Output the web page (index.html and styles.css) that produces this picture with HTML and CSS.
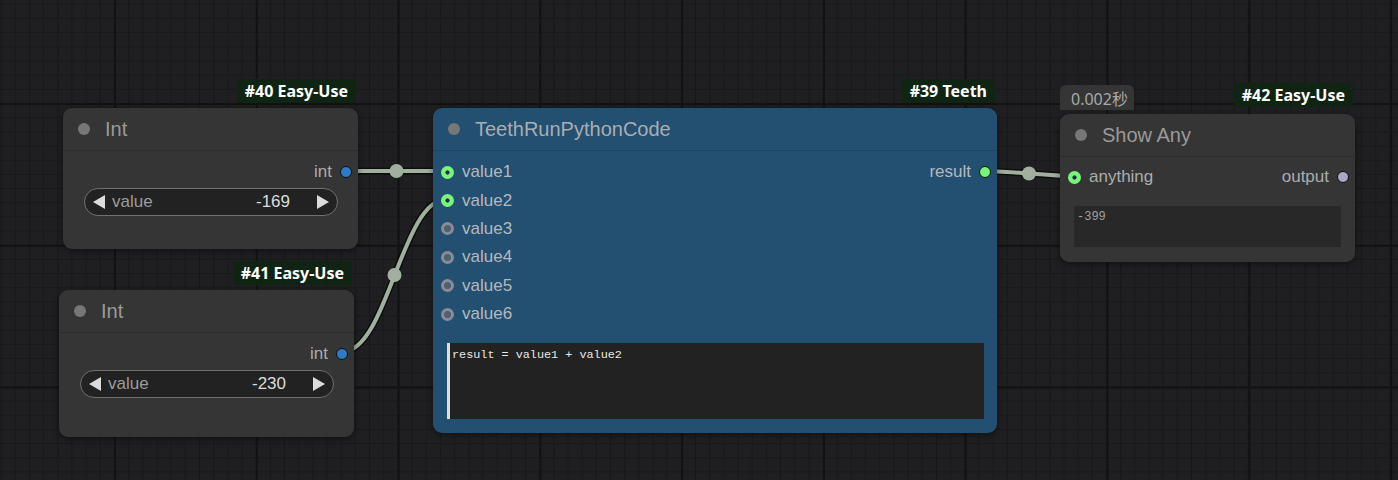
FILE: index.html
```html
<!DOCTYPE html>
<html>
<head>
<meta charset="utf-8">
<link rel="stylesheet" href="styles.css">
</head>
<body>
<div class="canvas">
  <svg class="links" width="1398" height="480" viewBox="0 0 1398 480">
    <g fill="none" stroke-linecap="round">
      <path class="link-shadow" d="M346 171 C371 171 422 171 447 171"/>
      <path class="link-shadow" d="M342 352 C388 352 401 199 447 199"/>
      <path class="link-shadow" d="M985 171 C1007 171 1051 176 1073 176"/>
      <path class="link" d="M346 171 C371 171 422 171 447 171"/>
      <path class="link" d="M342 352 C388 352 401 199 447 199"/>
      <path class="link" d="M985 171 C1007 171 1051 176 1073 176"/>
    </g>
    <g class="link-mid">
      <circle cx="396.5" cy="171" r="7"/>
      <circle cx="394.5" cy="275" r="7"/>
      <circle cx="1029" cy="173.5" r="7"/>
    </g>
  </svg>

  <div class="node node-gray n40">
    <div class="badge">#40 Easy-Use</div>
    <div class="title"><span class="status"></span><span class="title-text">Int</span></div>
    <div class="body">
      <div class="slot-row right"><span class="label">int</span><i class="sock sock-out sock-int"></i></div>
      <div class="widget">
        <svg class="arrow" width="12" height="14" viewBox="0 0 12 14"><polygon points="12,0 12,14 0,7"/></svg>
        <span class="w-label">value</span>
        <span class="w-value">-169</span>
        <svg class="arrow" width="12" height="14" viewBox="0 0 12 14"><polygon points="0,0 0,14 12,7"/></svg>
      </div>
    </div>
  </div>

  <div class="node node-gray n41">
    <div class="badge">#41 Easy-Use</div>
    <div class="title"><span class="status"></span><span class="title-text">Int</span></div>
    <div class="body">
      <div class="slot-row right"><span class="label">int</span><i class="sock sock-out sock-int"></i></div>
      <div class="widget">
        <svg class="arrow" width="12" height="14" viewBox="0 0 12 14"><polygon points="12,0 12,14 0,7"/></svg>
        <span class="w-label">value</span>
        <span class="w-value">-230</span>
        <svg class="arrow" width="12" height="14" viewBox="0 0 12 14"><polygon points="0,0 0,14 12,7"/></svg>
      </div>
    </div>
  </div>

  <div class="node node-blue n39">
    <div class="badge">#39 Teeth</div>
    <div class="title"><span class="status"></span><span class="title-text">TeethRunPythonCode</span></div>
    <div class="body">
      <div class="slots">
        <div class="col">
          <div class="slot-row"><i class="sock sock-in on"></i><span class="label">value1</span></div>
          <div class="slot-row"><i class="sock sock-in on"></i><span class="label">value2</span></div>
          <div class="slot-row"><i class="sock sock-in off"></i><span class="label">value3</span></div>
          <div class="slot-row"><i class="sock sock-in off"></i><span class="label">value4</span></div>
          <div class="slot-row"><i class="sock sock-in off"></i><span class="label">value5</span></div>
          <div class="slot-row"><i class="sock sock-in off"></i><span class="label">value6</span></div>
        </div>
        <div class="col">
          <div class="slot-row right"><span class="label">result</span><i class="sock sock-out sock-green"></i></div>
        </div>
      </div>
      <div class="code">result = value1 + value2</div>
    </div>
  </div>

  <div class="node node-gray n42">
    <div class="timing">0.002秒</div>
    <div class="badge">#42 Easy-Use</div>
    <div class="title"><span class="status"></span><span class="title-text">Show Any</span></div>
    <div class="body">
      <div class="slots">
        <div class="slot-row"><i class="sock sock-in on"></i><span class="label">anything</span></div>
        <div class="slot-row right"><span class="label">output</span><i class="sock sock-out sock-any"></i></div>
      </div>
      <div class="textbox">-399</div>
    </div>
  </div>
</div>
</body>
</html>
```

FILE: styles.css
```css
html, body {
  margin: 0;
  padding: 0;
  background: #1d1d1f;
}

.canvas {
  position: relative;
  width: 1398px;
  height: 480px;
  overflow: hidden;
  background-color: #1f1f21;
  background-image:
    linear-gradient(to right, #121213 2px, transparent 2px),
    linear-gradient(to bottom, #121213 2px, transparent 2px),
    linear-gradient(to right, #18181a 1px, transparent 1px),
    linear-gradient(to bottom, #18181a 1px, transparent 1px);
  background-size: 141.8px 141.8px, 141.8px 141.8px, 14.18px 14.18px, 14.18px 14.18px;
  background-position: 114px 103px, 114px 103px, 114px 103px, 114px 103px;
  font-family: "Liberation Sans", Arial, sans-serif;
}

.links {
  position: absolute;
  left: 0;
  top: 0;
}

.link-shadow {
  stroke: rgba(0, 0, 0, 0.55);
  stroke-width: 7;
}

.link {
  stroke: #a1b09e;
  stroke-width: 4;
}

.link-mid circle {
  fill: #a1b09e;
}

/* nodes */
.node {
  position: absolute;
  width: 295px;
  border-radius: 9px;
  box-shadow: 0 2px 6px rgba(0, 0, 0, 0.45);
  display: flex;
  flex-direction: column;
}

.node-gray {
  background: #353535;
}

.node-blue {
  background: #234f70;
}

.n40 { left: 63px; top: 108px; height: 141px; }
.n41 { left: 59px; top: 290px; height: 147px; }
.n39 { left: 433px; top: 108px; width: 564px; height: 325px; }
.n42 { left: 1060px; top: 114px; height: 148px; }

.badge {
  position: absolute;
  right: 2px;
  top: -29px;
  height: 24px;
  padding: 0 8px;
  display: flex;
  align-items: center;
  background: #0f2413;
  color: #ffffff;
  font-family: "Noto Sans", sans-serif;
  font-weight: 700;
  font-size: 16px;
  border-radius: 3px;
}

.n42 .badge {
  top: -31px;
}

.timing {
  position: absolute;
  left: 0;
  top: -29px;
  height: 25px;
  padding: 0 6px 0 11px;
  display: flex;
  align-items: center;
  background: #353535;
  color: #a8a8a8;
  font-family: "Noto Sans", "Noto Sans CJK SC", sans-serif;
  font-size: 16px;
  border-radius: 6px 6px 0 0;
}

.title {
  height: 43px;
  flex: none;
  display: flex;
  align-items: center;
  padding-left: 15px;
  border-bottom: 1px solid #2c2c2c;
  box-sizing: border-box;
  font-size: 20px;
  color: #9a9a9a;
}

.node-blue .title {
  border-bottom-color: #1d4462;
  color: #a9aeb2;
}

.status {
  width: 12px;
  height: 12px;
  border-radius: 50%;
  background: #777777;
  margin-right: 15px;
  flex: none;
}

.body {
  display: flex;
  flex-direction: column;
  padding-top: 7px;
}

.n42 .body {
  padding-top: 6px;
}

.slots {
  display: flex;
  justify-content: space-between;
}

.col {
  display: flex;
  flex-direction: column;
}

.slot-row {
  height: 28.4px;
  display: flex;
  align-items: center;
  padding-left: 8px;
  font-size: 17px;
  color: #acacac;
}

.node-blue .slot-row {
  color: #b4b9be;
}

.slot-row.right {
  justify-content: flex-end;
  padding-left: 0;
  padding-right: 6px;
}

.sock {
  display: block;
  box-sizing: border-box;
  border-radius: 50%;
  flex: none;
}

.sock-out {
  width: 12px;
  height: 12px;
  border: 1.5px solid #101010;
  margin-left: 8px;
}

.sock-int { background: #2f7cc6; }
.sock-green { background: #77f777; }
.sock-any { background: #a9a7c4; }

.sock-in {
  width: 13px;
  height: 13px;
  margin-right: 8px;
}

.sock-in.on {
  background: radial-gradient(circle, #1d3047 0 1.8px, #7af57a 2.4px);
}

.sock-in.off {
  border: 3px solid #8b8b98;
  background: #4c6070;
}

.node-gray .sock-in.off {
  background: #555;
}

/* widget */
.widget {
  margin: 2px 20px 0 21px;
  height: 28px;
  box-sizing: border-box;
  border: 1px solid #707070;
  border-radius: 14px;
  background: #222222;
  display: flex;
  align-items: center;
  padding: 0 8px 0 8px;
  font-size: 17px;
}

.arrow {
  flex: none;
  fill: #dcdcdc;
}

.w-label {
  margin-left: 7px;
  color: #9c9c9c;
  flex: 1;
}

.w-value {
  color: #dcdcdc;
  margin-right: 27px;
}

/* code editor */
.code {
  margin: 15px 13px 0 14px;
  height: 76px;
  box-sizing: border-box;
  background: #222222;
  border-left: 3px solid #dedede;
  padding: 5px 2px;
  font-family: "Liberation Mono", "DejaVu Sans Mono", monospace;
  font-size: 11.8px;
  color: #e8e8e8;
  white-space: pre;
}

.textbox {
  margin: 15px 14px 0 14px;
  height: 41px;
  box-sizing: border-box;
  background: #282828;
  padding: 4px 3px;
  font-family: "Liberation Mono", "DejaVu Sans Mono", monospace;
  font-size: 12px;
  color: #a0a0a0;
}
```
